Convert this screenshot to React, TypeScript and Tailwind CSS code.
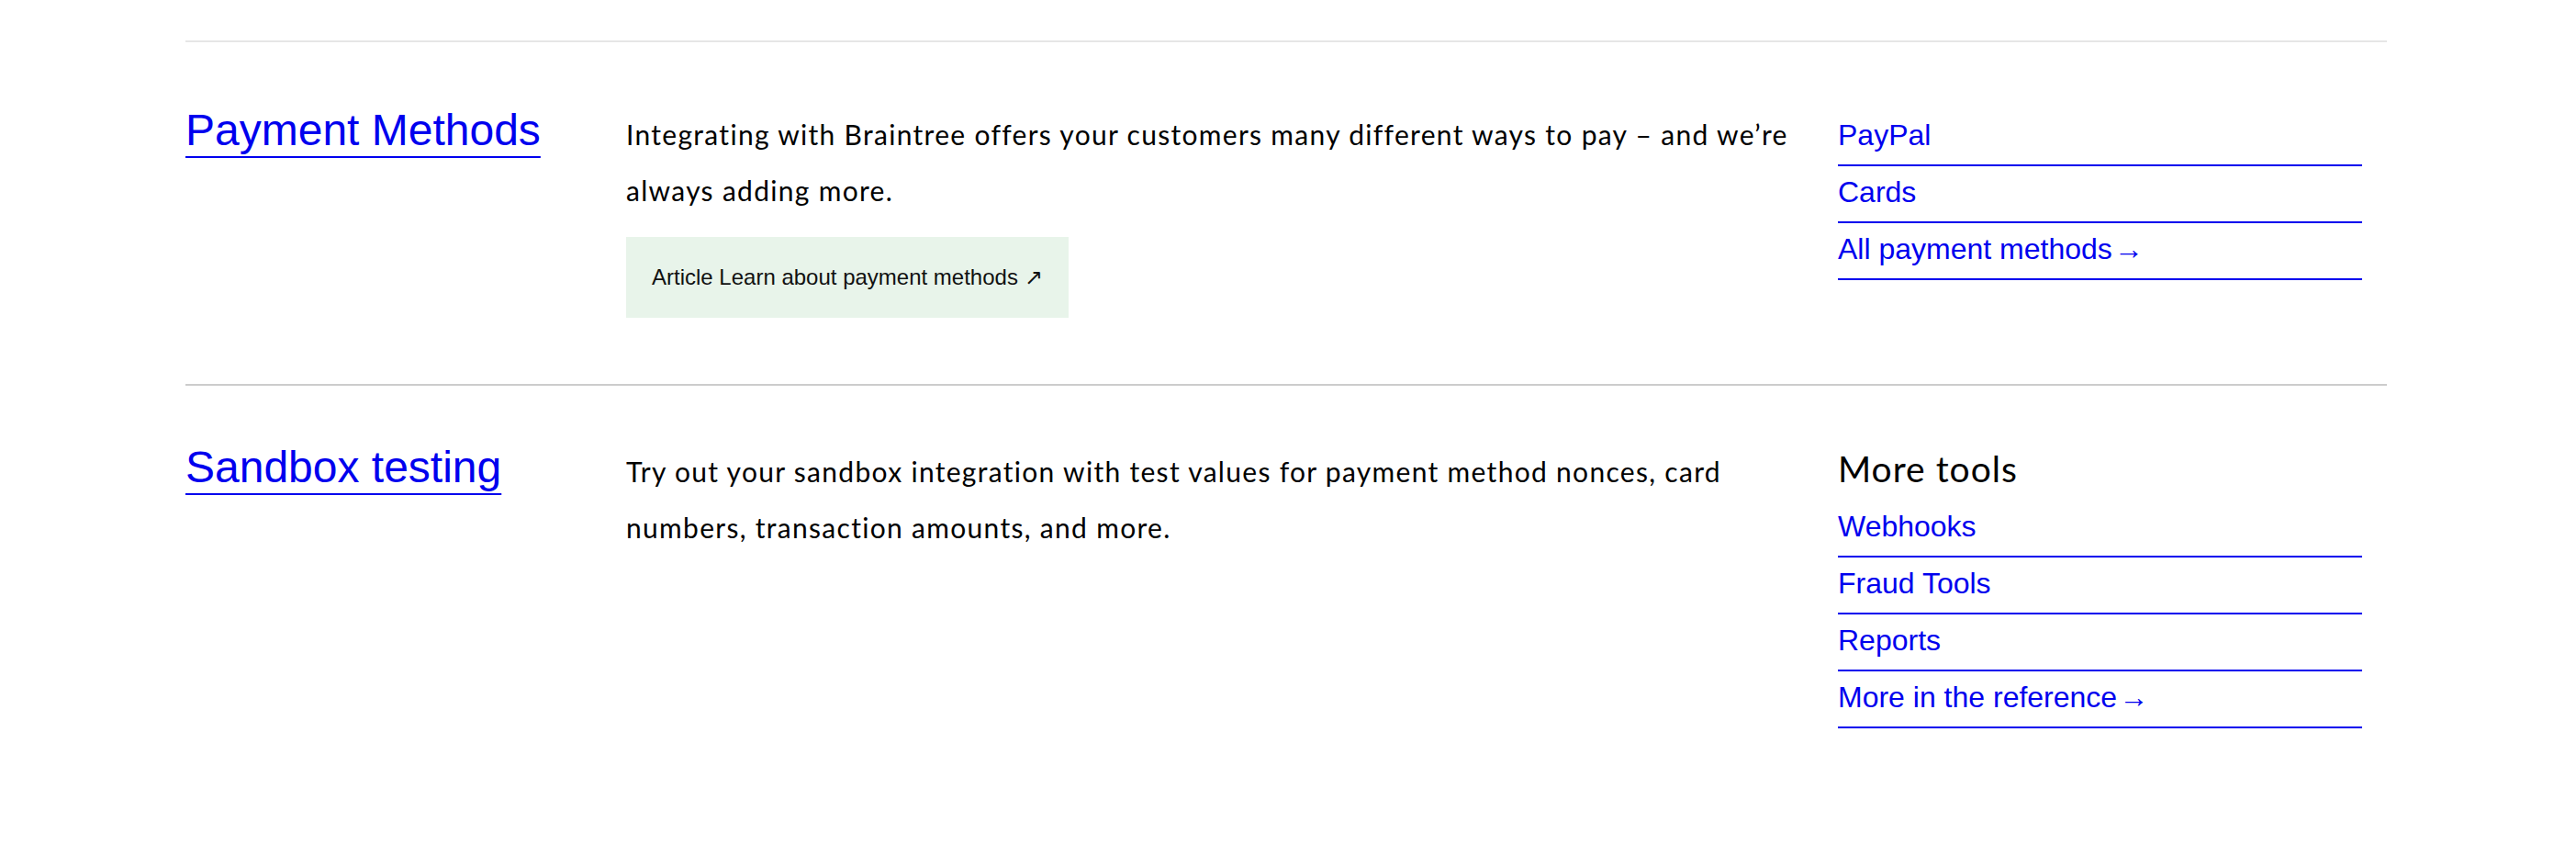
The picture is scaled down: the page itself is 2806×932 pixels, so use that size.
import type { ReactNode } from "react";

type Link = { label: string; arrow?: boolean };

const paymentLinks: Link[] = [
  { label: "PayPal" },
  { label: "Cards" },
  { label: "All payment methods", arrow: true },
];

const toolLinks: Link[] = [
  { label: "Webhooks" },
  { label: "Fraud Tools" },
  { label: "Reports" },
  { label: "More in the reference", arrow: true },
];

function LinkList({ links }: { links: Link[] }) {
  return (
    <ul>
      {links.map((l) => (
        <li key={l.label}>
          <a
            href="#"
            className="block border-b-2 border-[#0000ee] pt-[10px] pb-[13px] font-['Liberation_Sans',Arial,sans-serif] text-[32px] leading-[37px] text-[#0000ee]"
          >
            {l.label}
            {l.arrow && <span className="ml-[2px]">→</span>}
          </a>
        </li>
      ))}
    </ul>
  );
}

function Section({
  title,
  className,
  body,
  children,
}: {
  title: string;
  className: string;
  body: ReactNode;
  children: ReactNode;
}) {
  return (
    <section className={className}>
      <div className="flex items-baseline">
        <div className="w-[480px] shrink-0">
          <a
            href="#"
            className="font-['Liberation_Sans',Arial,sans-serif] text-[48px] text-[#0000ee] underline decoration-2 underline-offset-[12px]"
          >
            {title}
          </a>
        </div>
        <div className="mr-[40px] w-[1280px] shrink-0">{body}</div>
        <div className="w-[571px] shrink-0">{children}</div>
      </div>
    </section>
  );
}

export default function App() {
  return (
    <div className="min-h-[932px] bg-white pt-[44px] pr-[206px] pl-[202px] font-['Lato','Noto_Sans',sans-serif] text-black">
      <Section
        title="Payment Methods"
        className="border-t-2 border-[#e6e6e6] pt-[60px] pb-[72px]"
        body={
          <>
            <p className="text-[30px] leading-[61px] tracking-[1.3px]">
              Integrating with Braintree offers your customers many different
              ways to pay – and we’re always adding more.
            </p>
            <a
              href="#"
              className="mt-[20px] inline-flex h-[88px] items-center bg-[#e8f4ea] px-[28px] font-['Liberation_Sans',Arial,sans-serif] text-[24px] text-[#111]"
            >
              Article Learn about payment methods ↗
            </a>
          </>
        }
      >
        <LinkList links={paymentLinks} />
      </Section>

      <Section
        title="Sandbox testing"
        className="border-t-2 border-[#cccccc] pt-[53px]"
        body={
          <p className="text-[30px] leading-[61px] tracking-[1.3px]">
            Try out your sandbox integration with test values for payment
            method nonces, card numbers, transaction amounts, and more.
          </p>
        }
      >
        <h3 className="mb-[12px] text-[39px] leading-[45px] tracking-[1px]">
          More tools
        </h3>
        <LinkList links={toolLinks} />
      </Section>
    </div>
  );
}
